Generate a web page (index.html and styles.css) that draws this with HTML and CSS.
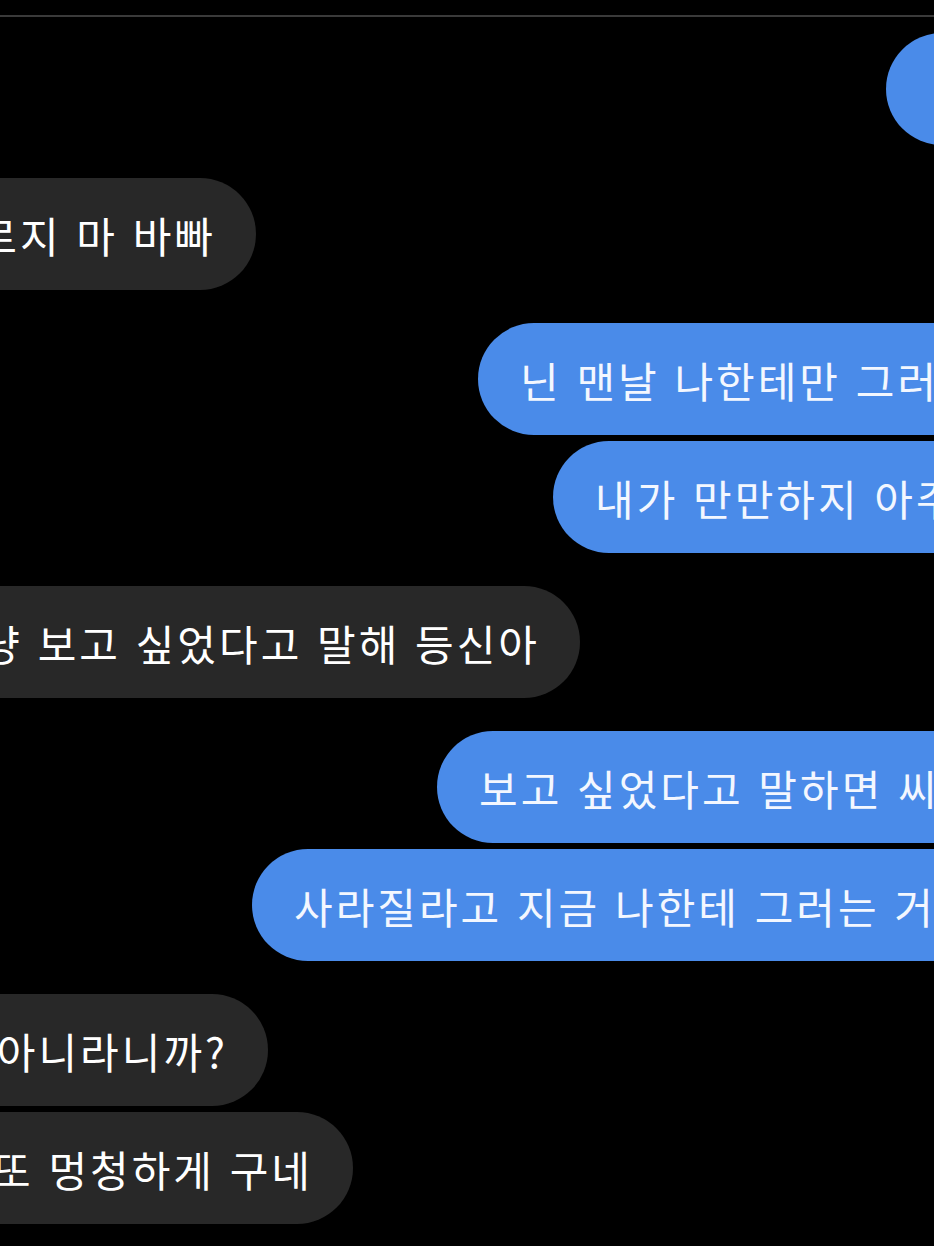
FILE: index.html
```html
<!DOCTYPE html>
<html lang="ko">
<head>
<meta charset="utf-8">
<title>Chat</title>
<link rel="stylesheet" href="styles.css">
</head>
<body>
<div class="screen">
  <div class="topline"></div>
  <div class="thread">
    <div class="bubble sent b1"><span class="txt"></span></div>

    <div class="bubble recv b2 group"><span class="txt">르지 마 바빠</span></div>

    <div class="bubble sent b3 group"><span class="txt">닌 맨날 나한테만 그러</span></div>
    <div class="bubble sent b4"><span class="txt">내가 만만하지 아주</span></div>

    <div class="bubble recv b5 group"><span class="txt">냥 보고 싶었다고 말해 등신아</span></div>

    <div class="bubble sent b6 group"><span class="txt">보고 싶었다고 말하면 씨</span></div>
    <div class="bubble sent b7"><span class="txt">사라질라고 지금 나한테 그러는 거</span></div>

    <div class="bubble recv b8 group"><span class="txt">아니라니까?</span></div>
    <div class="bubble recv b9"><span class="txt">또 멍청하게 구네</span></div>
  </div>
</div>
</body>
</html>
```

FILE: styles.css
```css
html, body {
  margin: 0;
  padding: 0;
  background: #000;
}

.screen {
  width: 934px;
  height: 1246px;
  overflow: hidden;
  background: #000;
  font-family: "Noto Sans CJK KR", "Noto Sans", sans-serif;
}

.topline {
  margin-top: 15px;
  height: 2px;
  background: #3a3a3a;
}

.thread {
  display: flex;
  flex-direction: column;
  gap: 6px;
  padding-top: 16px;
}

.group {
  margin-top: 27px;
}

.bubble {
  height: 112px;
  border-radius: 56px;
  display: flex;
  align-items: center;
  white-space: nowrap;
  overflow: hidden;
  font-size: 42px;
  letter-spacing: 3px;
  line-height: 1;
}

.txt {
  flex: none;
  padding-top: 2px;
}

.sent {
  background: #4a8be9;
  color: #f3f7ff;
  margin-right: -80px;
  padding-left: 42px;
  justify-content: flex-start;
}

.recv {
  background: #282828;
  color: #ffffff;
  margin-left: -200px;
  padding-right: 40px;
  justify-content: flex-end;
}

.b1 { margin-left: 886px; }
.b3 { margin-left: 478px; }
.b4 { margin-left: 553px; }
.b6 { margin-left: 437px; }
.b7 { margin-left: 252px; }

.b2 { margin-right: 678px; }
.b5 { margin-right: 354px; }
.b8 { margin-right: 666px; }
.b9 { margin-right: 581px; }
```
